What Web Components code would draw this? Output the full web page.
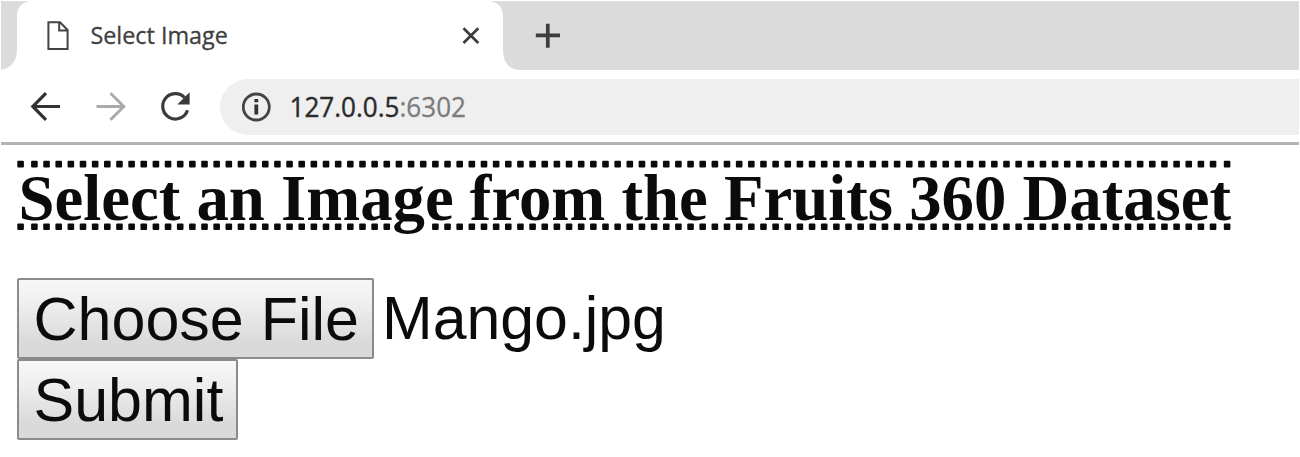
<!DOCTYPE html>
<html lang="en"><head><meta charset="utf-8"><title>Select Image</title>
<style>body{margin:0;background:#fff;width:1300px;height:457px;overflow:hidden}</style></head>
<body>
<browser-window>
  <browser-tabs slot="tabs">Select Image</browser-tabs>
  <browser-toolbar slot="toolbar" host="127.0.0.5" port=":6302"></browser-toolbar>
  <dotted-heading>Select an Image from the Fruits 360 Dataset</dotted-heading>
  <file-picker file="Mango.jpg">Choose File</file-picker>
  <classic-button style="--w:221px;--h:81px">Submit</classic-button>
</browser-window>
<script>
const define=(name,html,setup)=>customElements.define(name,class extends HTMLElement{
  constructor(){super();const r=this.attachShadow({mode:'open'});const t=document.createElement('template');t.innerHTML=html;r.append(t.content.cloneNode(true));if(setup)setup(this,r);}
});

define('browser-window',`<style>
:host{display:flex;flex-direction:column;box-sizing:border-box;height:457px;padding:1px 1px 0;background:#fff}
main{display:flex;flex-direction:column;align-items:flex-start;padding:15px 0 0 16px}
</style><slot name="tabs"></slot><slot name="toolbar"></slot><main><slot></slot></main>`);

define('browser-tabs',`<style>
:host{display:block;height:69px;position:relative;background:#dbdbdb}
.bg{position:absolute;inset:0}
.row{position:relative;display:flex;height:69px}
svg{display:block;flex:none}
</style>
<svg class="bg" width="520" height="69"><path d="M0 69C9 67 16 61 16 49V15C16 7 20 2 28 0H488C497 1 502 6 502 15V48C502 62 508 68 518 69Z" fill="#fff"/></svg>
<div class="row">
<svg width="89" height="69" viewBox="1 1 89 69" fill="none" stroke="#444" stroke-width="2"><path d="M48.4 22.2H60L67.6 30V49H48.4Z M59.2 22.5V30.5H67.5"/></svg>
<svg width="350" height="69" viewBox="90 1 350 69"><text x="90.4" y="43.6" font-family="'Open Sans','Noto Sans',sans-serif" font-size="24" fill="#3e3e3e" stroke="#3e3e3e" stroke-width=".3" textLength="137.5" lengthAdjust="spacingAndGlyphs"></text></svg>
<svg width="160" height="69" viewBox="440 1 160 69" fill="none" stroke="#3d3d3d"><path d="M463.5 28.2L478.3 43M478.3 28.2L463.5 43" stroke-width="2.7"/><path d="M547.8 23.7V47.7M535.8 35.4H560" stroke-width="3.7"/></svg>
</div>`,(el,r)=>{r.querySelector('text').textContent=el.textContent});

define('browser-toolbar',`<style>
:host{display:flex;height:72px;border-bottom:3px solid #b3b3b3;background:#fff}
svg{display:block;flex:none}
.omni{flex:1;display:flex;height:56px;margin-top:8.5px;background:#efefef;border-radius:28px 0 0 28px}
</style>
<svg width="219" height="72" viewBox="1 70 219 72" fill="none">
<path d="M60 106.5H33.5M46 93.2L32.8 106.5L46 119.8" stroke="#333" stroke-width="3.2"/>
<path d="M96.5 106.5H123M110.5 93.2L123.8 106.5L110.5 119.8" stroke="#aaa" stroke-width="2.9"/>
<path d="M187.5 110.2A12.7 12.7 0 1 1 184.6 97.5" stroke="#3b3b3b" stroke-width="3.2"/>
<path d="M189.6 92.3V104.6H177.3Z" fill="#3b3b3b"/></svg>
<div class="omni"><svg width="260" height="56" viewBox="220 78.5 260 56">
<circle cx="256.3" cy="106.5" r="13" fill="none" stroke="#444" stroke-width="2.8"/>
<path d="M256.3 98.5V101.8M256.3 104V114" stroke="#333" stroke-width="3.8"/>
<text x="289.5" y="116.3" font-family="'Open Sans','Noto Sans',sans-serif" font-size="27" fill="#2b2b2b" textLength="176.5" lengthAdjust="spacingAndGlyphs"><tspan class="h" stroke="#2b2b2b" stroke-width=".4"></tspan><tspan class="p" fill="#7c7c7c" stroke="#7c7c7c" stroke-width=".3"></tspan></text></svg></div>`,
(el,r)=>{r.querySelector('.h').textContent=el.getAttribute('host');r.querySelector('.p').textContent=el.getAttribute('port')});

define('dotted-heading',`<style>
:host{display:block;position:relative;width:1216px;height:118px;color:#0b0b0b}
svg{position:absolute;left:0;top:0}
h1{position:relative;margin:0;font:bold 64.75px/74px "Liberation Serif",serif;white-space:nowrap;padding:1px 0 0 1.5px}
</style>
<svg width="1216" height="80"></svg><h1><slot></slot></h1>`,(el,r)=>{
  const xs=[17.3];for(let i=0;i<98;i++)xs.push(31.1+i*12.151);xs.push(1223.8);
  r.querySelector('svg').innerHTML=[160.8,223.4].map((y,row)=>xs.filter(x=>!(row&&x>389&&x<426)).map(x=>`<rect x="${(x-17).toFixed(2)}" y="${(y-160).toFixed(1)}" width="6.6" height="6.6" rx="1" fill="#0b0b0b"/>`).join('')).join('');
});

define('classic-button',`<style>
:host{display:block}
button{display:block;box-sizing:border-box;width:var(--w);height:var(--h);margin:0;padding:0 0 0 14.5px;border:2px solid #8b8b8b;border-radius:2px;background:linear-gradient(#f7f7f7,#ededed 35%,#dadada 80%,#d9d9d9);color:#0b0b0b;font:61px/76px "Liberation Sans",sans-serif;text-align:left;white-space:nowrap}
</style><button type="button"><slot></slot></button>`);

define('file-picker',`<style>
:host{display:flex;gap:8px;color:#0b0b0b;font:60.8px/80px "Liberation Sans",sans-serif;height:81px}
</style><classic-button style="--w:357px;--h:81px"><slot></slot></classic-button><span></span>`,
(el,r)=>{r.querySelector('span').textContent=el.getAttribute('file')});
</script>
</body></html>
